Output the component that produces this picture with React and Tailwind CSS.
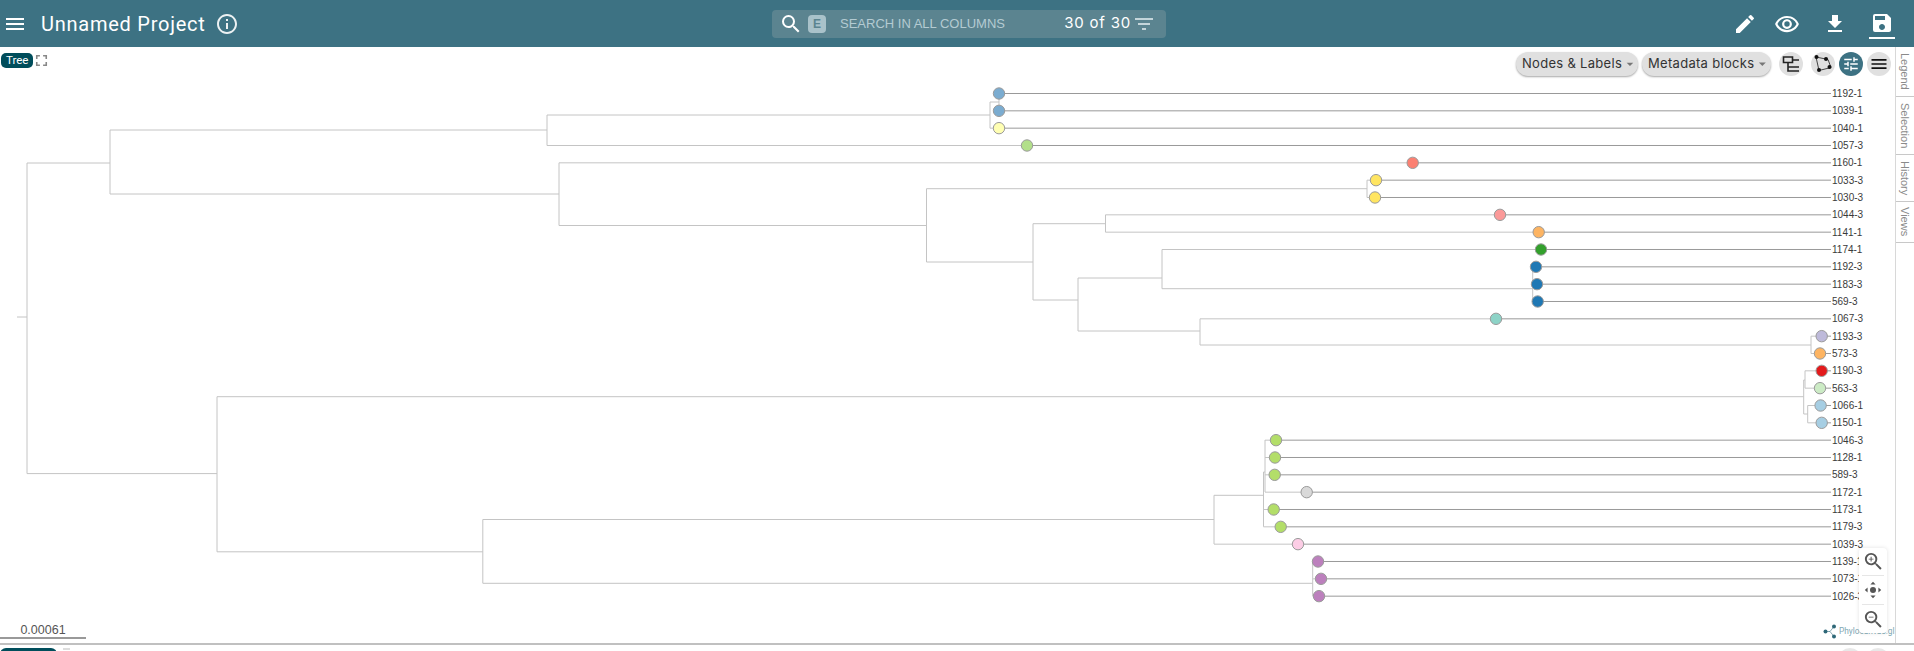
import React from "react";
import {
  MdMenu,
  MdInfoOutline,
  MdEdit,
  MdOutlineRemoveRedEye,
  MdFileDownload,
  MdSave,
  MdSearch,
  MdFilterList,
  MdTune,
  MdZoomIn,
  MdZoomOut,
  MdFullscreen,
  MdArrowDropDown,
} from "react-icons/md";

const HEADER = 47;
const ROW_TOP = 93.5 - HEADER;
const ROW = 17.3333;
const rowY = (i) => ROW_TOP + i * ROW;

const leaves = [
  ["1192-1", 999, "#7bacd0"],
  ["1039-1", 999, "#7bacd0"],
  ["1040-1", 999, "#ffffb3"],
  ["1057-3", 1027, "#b2df8a"],
  ["1160-1", 1412.7, "#fb8072"],
  ["1033-3", 1376, "#ffe561"],
  ["1030-3", 1375, "#ffe561"],
  ["1044-3", 1500, "#fb9a99"],
  ["1141-1", 1538.7, "#fdb462"],
  ["1174-1", 1541, "#33a02c"],
  ["1192-3", 1536, "#1f78b4"],
  ["1183-3", 1537, "#1f78b4"],
  ["569-3", 1537.7, "#1f78b4"],
  ["1067-3", 1496, "#8dd3c7"],
  ["1193-3", 1821.7, "#bebada"],
  ["573-3", 1820, "#fdb462"],
  ["1190-3", 1821.7, "#e31a1c"],
  ["563-3", 1820, "#ccebc5"],
  ["1066-1", 1820.6, "#a6cee3"],
  ["1150-1", 1821.7, "#a6cee3"],
  ["1046-3", 1276, "#b3de69"],
  ["1128-1", 1275, "#b3de69"],
  ["589-3", 1274.7, "#b3de69"],
  ["1172-1", 1306.7, "#d9d9d9"],
  ["1173-1", 1273.7, "#b3de69"],
  ["1179-3", 1280.7, "#b3de69"],
  ["1039-3", 1298, "#fccde5"],
  ["1139-1", 1318, "#bc80bd"],
  ["1073-1", 1321, "#bc80bd"],
  ["1026-3", 1319, "#bc80bd"],
];

// [parent x, leaf index]
const leafStems = [
  [999, 0], [999, 1], [990, 2], [547, 3], [559, 4], [1367, 5], [1367, 6],
  [1105.5, 7], [1105.5, 8], [1162, 9], [1532.7, 10], [1532.7, 11],
  [1532.7, 12], [1200, 13], [1811, 14], [1811, 15], [1805, 16],
  [1805, 17], [1807.7, 18], [1807.7, 19], [1265, 20], [1265, 21],
  [1265, 22], [1265, 23], [1263.5, 24], [1263.5, 25], [1214, 26],
  [1312.7, 27], [1312.7, 28], [1312.7, 29],
];

// internal branches, in page coordinates: [x1, y1, x2, y2]
const branches = [
  [17, 317, 27, 317],
  [27, 163, 27, 473.6],
  [27, 163, 110, 163],
  [27, 473.6, 217, 473.6],
  [110, 130, 110, 194],
  [110, 130, 547, 130],
  [110, 194, 559, 194],
  [547, 115, 547, 145.5],
  [547, 115, 990, 115],
  [990, 102, 990, 128.2],
  [990, 102, 999, 102],
  [999, 93.5, 999, 110.8],
  [559, 162.8, 559, 225.5],
  [559, 225.5, 926.5, 225.5],
  [926.5, 188.7, 926.5, 262],
  [926.5, 188.7, 1367, 188.7],
  [1367, 180.2, 1367, 197.5],
  [926.5, 262, 1033, 262],
  [1033, 223.7, 1033, 300],
  [1033, 223.7, 1105.5, 223.7],
  [1105.5, 214.8, 1105.5, 232.2],
  [1033, 300, 1078, 300],
  [1078, 278, 1078, 331],
  [1078, 278, 1162, 278],
  [1162, 249.5, 1162, 288.7],
  [1162, 288.7, 1532.7, 288.7],
  [1532.7, 267, 1532.7, 301.5],
  [1078, 331, 1200, 331],
  [1200, 318.8, 1200, 345],
  [1200, 345, 1811, 345],
  [1811, 336.2, 1811, 353.5],
  [217, 396.7, 217, 551.8],
  [217, 396.7, 1803.7, 396.7],
  [1803.7, 380, 1803.7, 414],
  [1803.7, 380, 1805, 380],
  [1805, 370.8, 1805, 388.1],
  [1803.7, 414, 1807.7, 414],
  [1807.7, 405.5, 1807.7, 422.8],
  [217, 551.8, 482.8, 551.8],
  [482.8, 519.5, 482.8, 583.3],
  [482.8, 519.5, 1214, 519.5],
  [1214, 495.3, 1214, 544],
  [1214, 495.3, 1263.5, 495.3],
  [1263.5, 472, 1263.5, 526.7],
  [1263.5, 472, 1265, 472],
  [1265, 440, 1265, 492],
  [482.8, 583.3, 1312.7, 583.3],
  [1312.7, 561.4, 1312.7, 596],
];

function TreeDrawing() {
  return (
    <svg width="1895" height="596" viewBox="0 0 1895 596" className="block">
      <g stroke="#c4c4c4" strokeWidth="1" fill="none">
        {branches.map(([x1, y1, x2, y2], i) => (
          <line key={i} x1={x1} y1={y1 - HEADER} x2={x2} y2={y2 - HEADER} />
        ))}
        {leafStems.map(([x, i]) => (
          <line key={i} x1={x} y1={rowY(i)} x2={leaves[i][1]} y2={rowY(i)} />
        ))}
      </g>
      <g stroke="#999999" strokeWidth="1">
        {leaves.map(([name, x], i) => (
          <line key={name + i} x1={x} y1={rowY(i)} x2="1831" y2={rowY(i)} />
        ))}
      </g>
      <g stroke="#9a9a9a" strokeWidth="1">
        {leaves.map(([name, x, color], i) => (
          <circle key={name + i} cx={x} cy={rowY(i)} r="5.7" fill={color} />
        ))}
      </g>
      <g className="font-['Liberation_Sans',Arial,sans-serif] text-[10px]" fill="#3a3a3a">
        {leaves.map(([name], i) => (
          <text key={name + i} x="1832" y={rowY(i) + 3.5}>
            {name}
          </text>
        ))}
      </g>
    </svg>
  );
}

function PillButton({ label, width }) {
  return (
    <button className={`flex h-6 ${width} items-center justify-between whitespace-nowrap rounded-full bg-[#e0e0e0] pl-1.5 text-[13px] tracking-[0.3px] text-[#333] shadow-[0_1px_2px_rgba(0,0,0,0.35)] font-['Inter',sans-serif]`}>
      <span>{label}</span>
      <MdArrowDropDown size={18} className="text-[#777]" />
    </button>
  );
}

function PhylocanvasLogo() {
  return (
    <svg width="15" height="15" viewBox="0 0 15 15">
      <g stroke="#3d7283" strokeWidth="1">
        <path d="M2.5 7.5H7L11 2.5M7 7.5L11 12.5" fill="none" opacity="0.6" />
      </g>
      <circle cx="2.5" cy="7.5" r="2" fill="#2f6878" />
      <circle cx="11" cy="2.5" r="2" fill="#2f6878" />
      <circle cx="11" cy="12.5" r="2" fill="#2f6878" />
    </svg>
  );
}

function MoveIcon() {
  return (
    <svg width="18" height="18" viewBox="0 0 18 18" fill="#555555">
      <circle cx="9" cy="9" r="3" />
      <path d="M9 0.8l2.6 2.8H6.4zM9 17.2l-2.6-2.8h5.2zM0.8 9l2.8-2.6v5.2zM17.2 9l-2.8 2.6V6.4z" />
    </svg>
  );
}

function SideTab({ label, height }) {
  return (
    <div className={`flex ${height} w-full items-center justify-center border-b border-[#c8c8c8] text-[11px] text-[#8a8a8a] font-['Liberation_Sans',sans-serif] [writing-mode:vertical-rl]`}>
      {label}
    </div>
  );
}

export default function App() {
  return (
    <div className="flex h-[651px] w-[1914px] flex-col overflow-hidden bg-white">
      <header className="grid h-[47px] shrink-0 grid-cols-[772px_394px_1fr] items-center bg-[#3d7283] text-white">
        <div className="flex items-center pl-[3px]">
          <MdMenu size={24} />
          <h1 className="ml-[14px] text-[20px] tracking-[0.75px] font-['Roboto',sans-serif]">
            Unnamed Project
          </h1>
          <MdInfoOutline size={24} className="ml-[9px] opacity-90" />
        </div>

        <div className="flex h-7 items-center rounded bg-[#5b8490] pl-[7px] pr-[10px]">
          <MdSearch size={24} />
          <span className="ml-[5px] flex h-[18px] w-[18px] items-center justify-center rounded-sm bg-[#a9c2ca] text-[12px] font-bold text-[#5b8490] font-['Liberation_Sans',sans-serif]">
            E
          </span>
          <span className="ml-[14px] text-[13px] text-[#b4cbd2] font-['Liberation_Sans',sans-serif]">
            SEARCH IN ALL COLUMNS
          </span>
          <span className="ml-auto text-[15px] tracking-[0.8px] font-['Inter',sans-serif]">
            30 of 30
          </span>
          <MdFilterList size={24} className="ml-[1px] text-[#c4d5da]" />
        </div>

        <div className="flex items-center justify-end pr-[20px]">
          <MdEdit size={24} />
          <MdOutlineRemoveRedEye size={26} className="ml-[17px]" />
          <MdFileDownload size={24} className="ml-[23px]" />
          <div className="relative mb-px ml-[23px]">
            <MdSave size={24} />
            <div className="absolute -bottom-[4px] -left-[1px] -right-[1px] h-0.5 bg-white" />
          </div>
        </div>
      </header>

      <div className="flex min-h-0 flex-1">
        <main className="relative min-w-0 flex-1 border-r border-[#d8d8d8]">
          <div className="absolute inset-0">
            <TreeDrawing />
          </div>

          <div className="absolute left-[1px] top-[4px] flex items-center">
            <span className="rounded-[5px] bg-[#004d5b] px-[5px] text-[11.5px] leading-[15px] text-white font-['Roboto',sans-serif]">
              Tree
            </span>
            <MdFullscreen size={19} className="-ml-px text-[#888]" />
          </div>

          <div className="absolute right-[4px] top-[5px] flex items-center">
            <PillButton label="Nodes & Labels" width="w-[122px]" />
            <div className="ml-[4px]">
              <PillButton label="Metadata blocks" width="w-[129px]" />
            </div>
            <button className="ml-[8px] flex h-6 w-6 items-center justify-center rounded-full bg-[#e0e0e0]">
              <svg width="18" height="18" viewBox="0 0 18 18" fill="none" stroke="#222" strokeWidth="1.6">
                <path d="M1.5 2h9v5.5h-9zM6 7.5V16h11M6 12h11M10.5 5h6.5" />
              </svg>
            </button>
            <button className="ml-[8px] flex h-6 w-6 items-center justify-center rounded-full bg-[#e0e0e0]">
              <svg width="20" height="20" viewBox="0 0 20 20">
                <path d="M3 3l12 2.5 3 8-12 3z" fill="none" stroke="#444" strokeWidth="1" />
                <g fill="#111">
                  <circle cx="3.5" cy="3" r="2" />
                  <circle cx="13" cy="5" r="2" />
                  <circle cx="16.5" cy="13" r="2" />
                  <circle cx="6" cy="16" r="2" />
                </g>
              </svg>
            </button>
            <button className="ml-[4px] flex h-6 w-6 items-center justify-center rounded-full bg-[#3d7283] text-white">
              <MdTune size={18} />
            </button>
            <button className="ml-[4px] flex h-6 w-6 items-center justify-center rounded-full bg-[#e0e0e0] text-[#111]">
              <MdMenu size={20} />
            </button>
          </div>

          <div className="absolute left-0 top-[576px] w-[86px] border-b-2 border-[#999] text-center text-[12.5px] leading-[14px] text-[#555] font-['Liberation_Sans',sans-serif]">
            0.00061
          </div>

          <div className="absolute bottom-[4px] left-[1823px] flex items-center gap-[1px] text-[8.3px] text-[#7fa8b4] font-['Roboto',sans-serif]">
            <PhylocanvasLogo />
            <span>Phylocanvas.gl</span>
          </div>

          <div className="absolute left-[1859px] top-[501px] flex w-[28px] flex-col items-center rounded bg-white text-[#555] shadow-[0_0_4px_rgba(0,0,0,0.12)]">
            <div className="flex h-[28px] w-[22px] items-center justify-center border-b border-[#e6e6e6]">
              <MdZoomIn size={23} className="shrink-0" />
            </div>
            <div className="flex h-[29px] w-[22px] items-center justify-center border-b border-[#e6e6e6]">
              <MoveIcon />
            </div>
            <div className="flex h-[28px] w-[22px] items-center justify-center">
              <MdZoomOut size={23} className="shrink-0" />
            </div>
          </div>
        </main>

        <aside className="w-[18px] shrink-0 self-start">
          <SideTab label="Legend" height="h-[50px]" />
          <SideTab label="Selection" height="h-[58px]" />
          <SideTab label="History" height="h-[47px]" />
          <SideTab label="Views" height="h-[41px]" />
        </aside>
      </div>

      <footer className="flex h-[8px] shrink-0 items-start gap-[6px] overflow-hidden border-t-2 border-[#c0c0c0] pt-[3px]">
        <div className="h-[10px] w-[57px] rounded-t-[6px] bg-[#004d5b]" />
        <div className="h-[10px] w-[7px] border-t-2 border-[#dddddd]" />
        <div className="ml-auto mr-[24px] flex gap-[4px]">
          <div className="h-6 w-6 rounded-full bg-[#e8e8e8]" />
          <div className="h-6 w-6 rounded-full bg-[#e8e8e8]" />
        </div>
      </footer>
    </div>
  );
}
